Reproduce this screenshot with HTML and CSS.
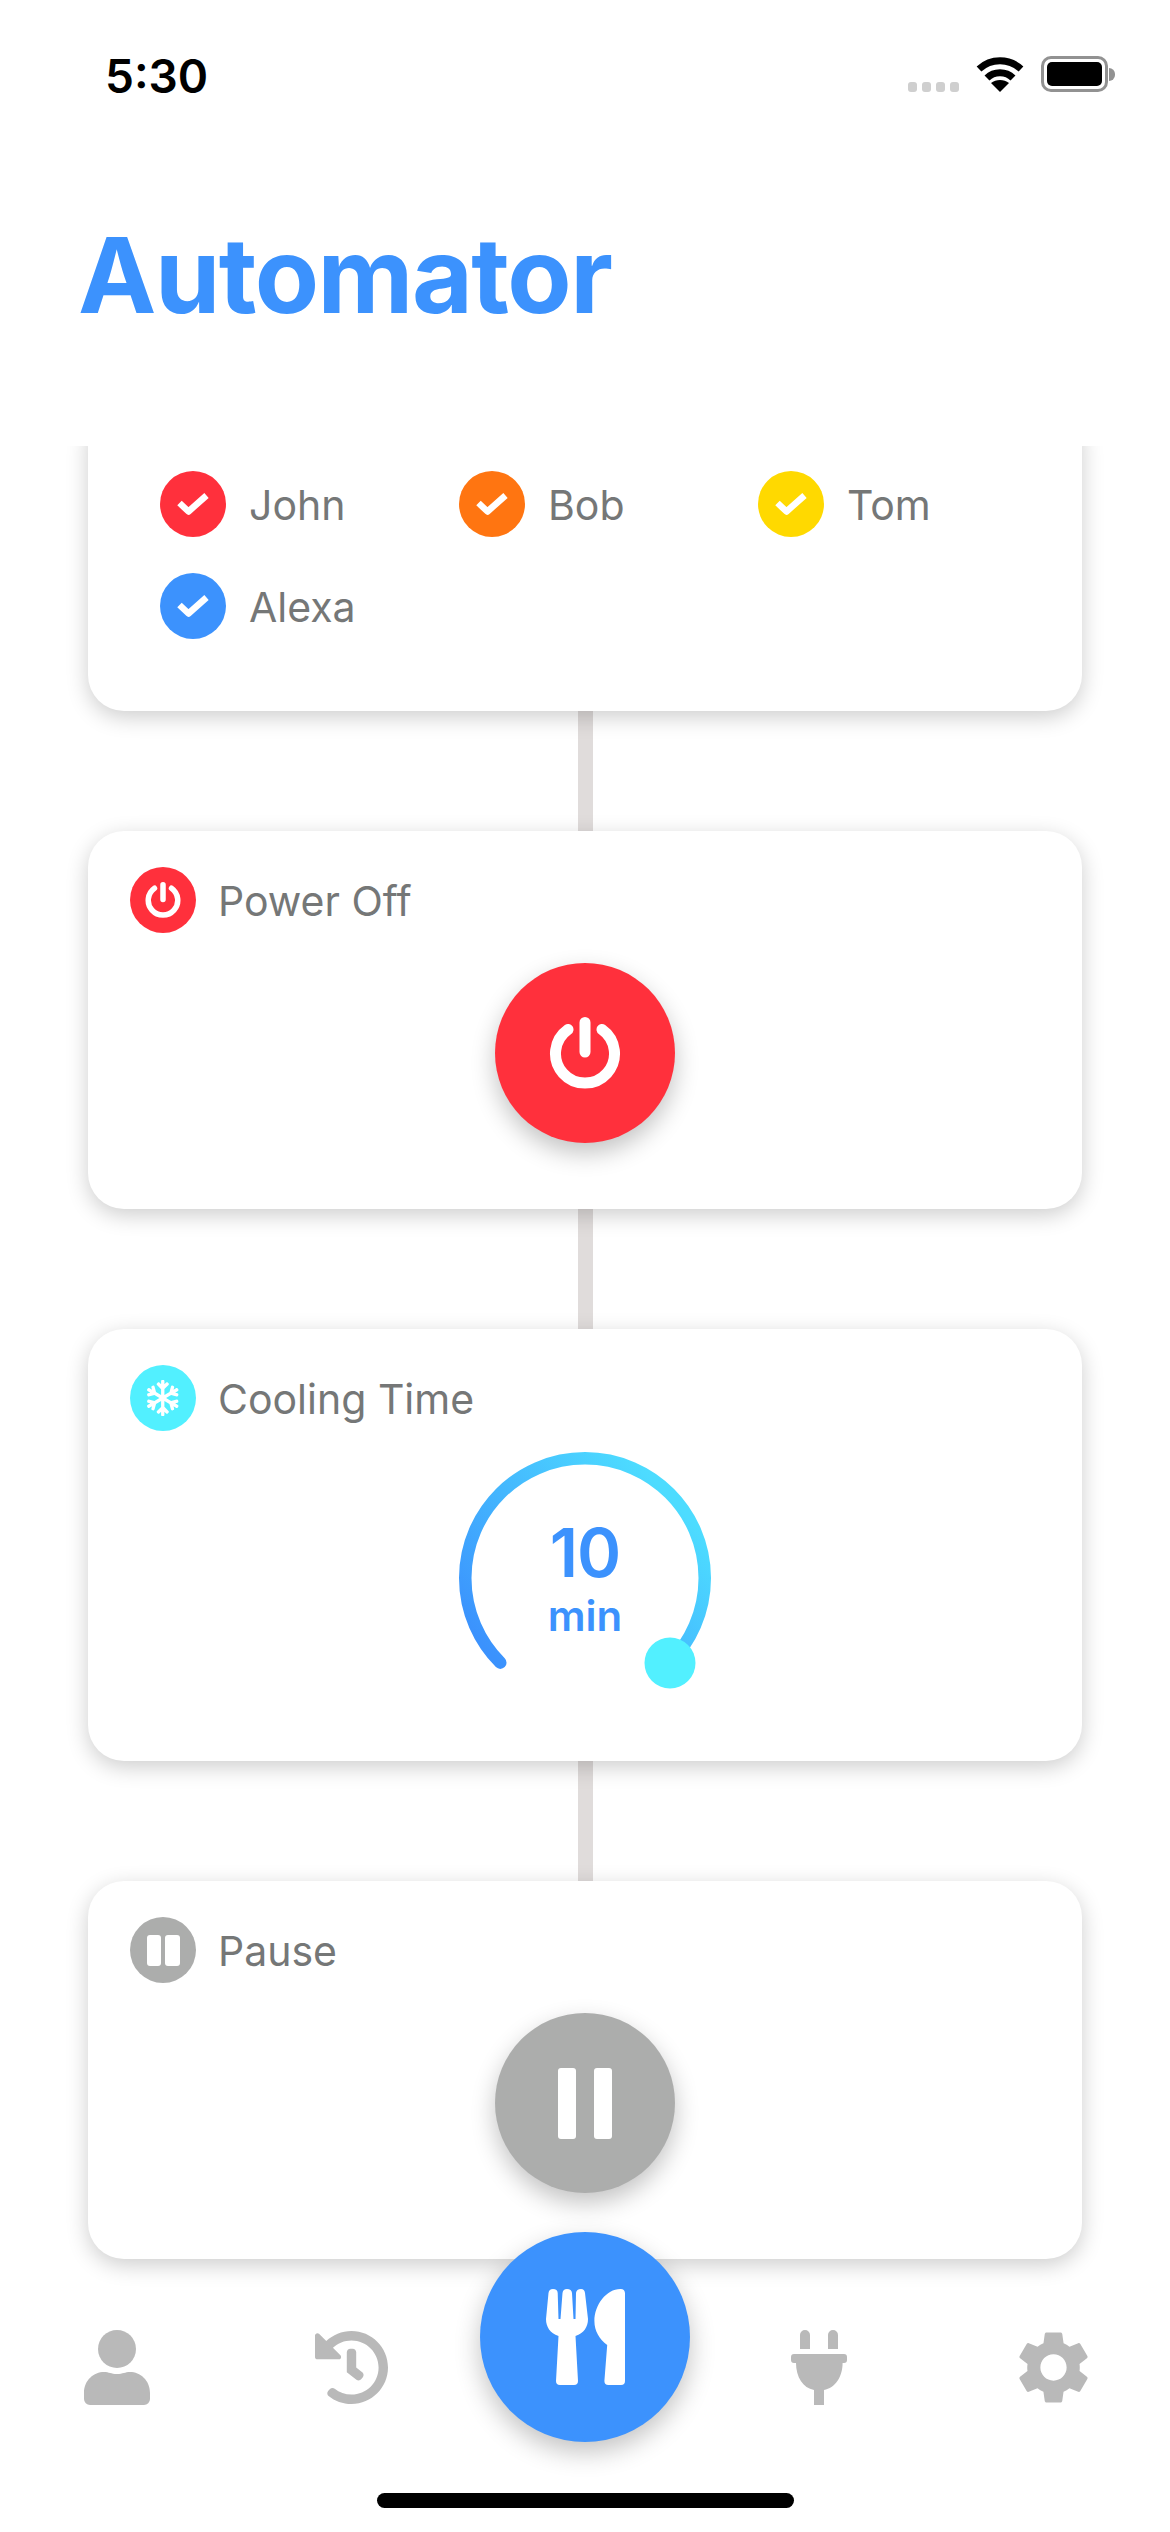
FILE: index.html
```html
<!DOCTYPE html>
<html lang="en">
<head>
<meta charset="utf-8">
<title>Automator</title>
<link rel="stylesheet" href="styles.css">
</head>
<body>
<svg class="defs" width="0" height="0" aria-hidden="true">
  <defs>
    <symbol id="power" viewBox="0 0 72 72">
      <path d="M19 12.5A29.5 29.5 0 1 0 53 12.5M36 5.5V35" fill="none" stroke="#fff" stroke-width="11" stroke-linecap="round"/>
    </symbol>
    <symbol id="check" viewBox="0 0 32 26">
      <path d="M2.500 12 11.500 20.500 29.500 4.500" fill="none" stroke="#fff" stroke-width="6.500" stroke-linejoin="round"/>
    </symbol>
  </defs>
</svg>
<div class="app">
  <div class="status">
    <span class="time">5:30</span>
    <div class="status-right">
      <div class="dots"><i></i><i></i><i></i><i></i></div>
      <svg class="wifi" viewBox="0 0 48 36" width="48" height="36">
        <path d="M3 13C15 2 33 2 45 13M11 22C18 15 30 15 37 22" fill="none" stroke="#000" stroke-width="7"/>
        <path d="M15 27C20 23 28 23 33 27L24 36z" fill="#000"/>
      </svg>
      <div class="battery"><div class="battery-body"><div class="battery-fill"></div></div><div class="battery-cap"></div></div>
    </div>
  </div>
  <header class="header"><h1 class="title">Automator</h1></header>
  <main class="scroll">
    <section class="card card-people">
      <div class="people">
        <div class="person"><span class="dot red"><svg class="check"><use href="#check"/></svg></span><span class="label">John</span></div>
        <div class="person"><span class="dot orange"><svg class="check"><use href="#check"/></svg></span><span class="label">Bob</span></div>
        <div class="person"><span class="dot yellow"><svg class="check"><use href="#check"/></svg></span><span class="label">Tom</span></div>
        <div class="person"><span class="dot blue"><svg class="check"><use href="#check"/></svg></span><span class="label">Alexa</span></div>
      </div>
    </section>
    <div class="link"></div>
    <section class="card">
      <div class="card-head"><span class="dot red"><svg class="small-power"><use href="#power"/></svg></span><span class="label">Power Off</span></div>
      <div class="action"><button class="round red"><svg class="big-power"><use href="#power"/></svg></button></div>
    </section>
    <div class="link"></div>
    <section class="card card-gauge">
      <div class="card-head"><span class="dot cyan">
        <svg class="snow" viewBox="0 0 448 512"><path fill="#fff" d="M440.1 355.2l-39.2-23 34.1-9.3c8.4-2.3 13.4-11.1 11.1-19.6l-4.1-15.5c-2.2-8.5-10.9-13.6-19.3-11.3L343 298.2 271.2 256l71.9-42.2 79.7 21.7c8.4 2.3 17-2.8 19.3-11.3l4.1-15.5c2.2-8.5-2.7-17.3-11.1-19.6l-34.1-9.3 39.2-23c7.5-4.4 10.1-14.2 5.8-21.9l-7.9-13.9c-4.3-7.7-14-10.3-21.5-5.9l-39.2 23 9.1-34.7c2.2-8.5-2.7-17.3-11.1-19.6l-15.2-4.1c-8.4-2.3-17 2.8-19.3 11.3l-21.3 81-71.9 42.2v-84.5L306 70.4c6.1-6.2 6.1-16.4 0-22.6l-11.1-11.3c-6.1-6.2-16.1-6.2-22.2 0l-24.9 25.4V16c0-8.8-7-16-15.7-16h-15.7c-8.7 0-15.7 7.2-15.7 16v46.1l-24.9-25.4c-6.1-6.2-16.1-6.2-22.2 0L142.1 48c-6.1 6.2-6.1 16.4 0 22.6l58.3 59.3v84.5l-71.9-42.2-21.3-81c-2.2-8.5-10.9-13.6-19.3-11.3L72.7 84c-8.4 2.3-13.4 11.1-11.1 19.6l9.1 34.7-39.2-23c-7.5-4.4-17.1-1.8-21.5 5.9l-7.9 13.9c-4.3 7.7-1.8 17.4 5.8 21.9l39.2 23-34.1 9.1c-8.4 2.3-13.4 11.1-11.1 19.6L6 224.2c2.2 8.5 10.9 13.6 19.3 11.3l79.7-21.7 71.9 42.2-71.9 42.2-79.7-21.7c-8.4-2.3-17 2.8-19.3 11.3l-4.1 15.5c-2.2 8.5 2.7 17.3 11.1 19.6l34.1 9.3-39.2 23c-7.5 4.4-10.1 14.2-5.8 21.9L10 391c4.3 7.7 14 10.3 21.5 5.9l39.2-23-9.1 34.7c-2.2 8.5 2.7 17.3 11.1 19.6l15.2 4.1c8.4 2.3 17-2.8 19.3-11.3l21.3-81 71.9-42.2v84.5l-58.3 59.3c-6.1 6.2-6.1 16.4 0 22.6l11.1 11.3c6.1 6.2 16.1 6.2 22.2 0l24.9-25.4V496c0 8.8 7 16 15.7 16h15.7c8.7 0 15.7-7.2 15.7-16v-46.1l24.9 25.4c6.1 6.2 16.1 6.2 22.2 0l11.1-11.3c6.1-6.2 6.1-16.4 0-22.6l-58.3-59.3v-84.5l71.9 42.2 21.3 81c2.2 8.5 10.9 13.6 19.3 11.3L375 428c8.4-2.3 13.4-11.1 11.1-19.6l-9.1-34.7 39.2 23c7.5 4.4 17.1 1.8 21.5-5.9l7.9-13.9c4.6-7.5 2.1-17.3-5.5-21.7z"/></svg>
      </span><span class="label">Cooling Time</span></div>
      <div class="gauge">
        <svg class="gauge-ring" viewBox="0 0 270 270" width="270" height="270">
          <defs><linearGradient id="ring" gradientUnits="userSpaceOnUse" x1="50" y1="220" x2="225" y2="60"><stop offset="0" stop-color="#3b92fd"/><stop offset="1" stop-color="#4ddcff"/></linearGradient></defs>
          <path d="M50.3 219.7A119.75 119.75 0 1 1 219.7 219.7" fill="none" stroke="url(#ring)" stroke-width="12.5" stroke-linecap="round"/>
          <circle cx="220" cy="220" r="25.5" fill="#52f0ff"/>
        </svg>
        <div class="gauge-text"><span class="gauge-value">10</span><span class="gauge-unit">min</span></div>
      </div>
    </section>
    <div class="link"></div>
    <section class="card">
      <div class="card-head"><span class="dot gray"><span class="bars small"><i></i><i></i></span></span><span class="label">Pause</span></div>
      <div class="action"><button class="round gray"><span class="bars big"><i></i><i></i></span></button></div>
    </section>
  </main>
  <nav class="tabbar">
    <div class="tabs">
      <div class="tab">
        <svg viewBox="0 0 66 75" width="66" height="75"><circle cx="33" cy="19" r="19"/><path d="M6 75H60a6 6 0 0 0 6-6V63C66 50 56 42 46 42c-5 0-7 2-13 2s-8-2-13-2C10 42 0 50 0 63v6a6 6 0 0 0 6 6z"/></svg>
      </div>
      <div class="tab">
        <svg viewBox="8 8 496 496" width="73" height="73"><path d="M504 255.531c.253 136.64-111.18 248.372-247.82 248.468-59.015.042-113.223-20.53-155.822-54.911-11.077-8.94-11.905-25.541-1.839-35.607l11.267-11.267c8.609-8.609 22.353-9.551 31.891-1.984C173.062 425.135 212.781 440 256 440c101.705 0 184-82.311 184-184 0-101.705-82.311-184-184-184-48.814 0-93.149 18.969-126.068 49.932l50.754 50.754c10.08 10.08 2.941 27.314-11.313 27.314H24c-8.837 0-16-7.163-16-16V38.627c0-14.254 17.234-21.393 27.314-11.314l49.372 49.372C129.209 34.136 189.552 8 256 8c136.81 0 247.747 110.78 248 247.531zm-180.912 78.784l9.823-12.63c8.138-10.463 6.253-25.542-4.21-33.679L288 256.349V152c0-13.255-10.745-24-24-24h-16c-13.255 0-24 10.745-24 24v135.651l65.409 50.874c10.463 8.137 25.541 6.253 33.679-4.21z"/></svg>
      </div>
      <div class="tab tab-center">
        <button class="fab">
          <svg viewBox="0 0 79 96" width="79" height="96" fill="#fff">
            <path d="M2.500 4Q3 0 7 0q4.500 0 4.700 4L12.500 30h2L16.500 4Q17 0 21 0q4.500 0 5 4l1.500 26h2L30 4q.5-4 5-4q3.500 0 4 4L42 30c0 8-4 14-12.500 17L32 92a4 4 0 0 1-4 4H14a4 4 0 0 1-4-4L12.500 47C4 44 0 38 0 30z"/>
            <path transform="translate(48.400 0)" d="M30.600 4V92a4 4 0 0 1-4 4H14a4 4 0 0 1-4-4L12.800 56C5 50 0 42 0 32 0 16 12 0 26 0a4.500 4.500 0 0 1 4.600 4z"/>
          </svg>
        </button>
      </div>
      <div class="tab">
        <svg viewBox="0 0 56 75" width="56" height="75"><path d="M9 5a5 5 0 0 1 10 0V19H9zM37 5a5 5 0 0 1 10 0V19H37zM3 24H53a3 3 0 0 1 3 3v3a3 3 0 0 1-3 3H51.600C51.600 47 44 58 33 60V75H23V60C12 58 5 47 5 33H3a3 3 0 0 1-3-3V27a3 3 0 0 1 3-3z"/></svg>
      </div>
      <div class="tab">
        <svg viewBox="2.600 2 18.800 20" width="69" height="73"><path fill-rule="evenodd" d="M19.140 12.940c.04-.3.06-.61.06-.94 0-.32-.02-.64-.07-.94l2.030-1.580c.18-.14.23-.41.12-.61l-1.920-3.320c-.12-.22-.37-.29-.59-.22l-2.390.96c-.5-.38-1.030-.7-1.620-.94l-.36-2.540c-.04-.24-.24-.41-.48-.41h-3.840c-.24 0-.43.17-.47.41l-.36 2.540c-.59.24-1.130.57-1.620.94l-2.390-.96c-.22-.08-.47 0-.59.22L2.740 8.870c-.12.21-.08.47.12.61l2.030 1.580c-.05.3-.09.63-.09.94s.02.64.07.94l-2.030 1.580c-.18.14-.23.41-.12.61l1.920 3.320c.12.22.37.29.59.22l2.390-.96c.5.38 1.030.7 1.620.94l.36 2.540c.05.24.24.41.48.41h3.840c.24 0 .44-.17.47-.41l.36-2.540c.59-.24 1.130-.56 1.620-.94l2.390.96c.22.08.47 0 .59-.22l1.920-3.320c.12-.22.07-.47-.12-.61l-2.010-1.580zM12 15.600c-1.980 0-3.600-1.620-3.600-3.600s1.620-3.600 3.600-3.600 3.600 1.620 3.600 3.600-1.620 3.600-3.600 3.600z"/></svg>
      </div>
    </div>
    <div class="home"></div>
  </nav>
</div>
</body>
</html>
```
FILE: styles.css
```css
* { box-sizing: border-box; }
html, body { margin: 0; padding: 0; background: #fff; }
body { font-family: Inter, "Liberation Sans", sans-serif; }
.defs { display: block; height: 0; }
.app { width: 1170px; height: 2532px; display: flex; flex-direction: column; overflow: hidden; background: #fff; }

.status { height: 109px; flex: none; padding: 0 55px 17px 105px; display: flex; justify-content: space-between; align-items: flex-end; }
.time { font-size: 46px; font-weight: 600; line-height: 32px; color: #000; }
.status-right { display: flex; align-items: flex-end; gap: 17px; }
.dots { display: flex; gap: 5px; }
.dots i { display: block; width: 9px; height: 10px; border-radius: 3px; background: #cfcfcf; }
.battery { display: flex; align-items: center; gap: 1px; }
.battery-body { width: 67px; height: 36px; border: 3px solid #929292; border-radius: 10px; padding: 3px; background: #fff; }
.battery-fill { width: 100%; height: 100%; background: #000; border-radius: 5px; }
.battery-cap { width: 6px; height: 13px; background: #929292; border-radius: 0 6px 6px 0; }

.header { height: 337px; flex: none; padding-top: 106px; }
.title { margin: 0 0 0 78px; font-size: 105px; line-height: 120px; font-weight: 700; letter-spacing: -1.5px; color: #3c92fd; }

.scroll { flex: 1; min-height: 0; overflow: hidden; display: flex; flex-direction: column; align-items: center; }
.card { position: relative; flex: none; width: 994px; background: #fff; border-radius: 36px; padding: 36px 42px 66px; box-shadow: 0 6px 22px rgba(0, 0, 0, .2); }
.card-people { margin-top: -40px; padding: 65px 72px 72px; }
.card-gauge { padding-bottom: 48px; }
.link { flex: none; width: 15px; height: 120px; background: #e0dcdb; }

.people { display: grid; grid-template-columns: repeat(3, 299px); row-gap: 36px; }
.person { display: flex; align-items: center; gap: 23px; }
.card-head { display: flex; align-items: center; gap: 22px; }
.dot { flex: none; width: 66px; height: 66px; border-radius: 50%; display: flex; align-items: center; justify-content: center; }
.label { font-size: 41px; font-weight: 400; color: #757777; line-height: 50px; padding-top: 2px; }
.red { background: #ff303c; }
.orange { background: #ff7511; }
.yellow { background: #ffd900; }
.blue { background: #3c92fd; }
.cyan { background: #52f0ff; }
.gray { background: #acadac; }
.check { width: 32px; height: 26px; }
.small-power { width: 36px; height: 36px; }
.snow { width: 31.5px; height: 36px; }

.action { display: flex; justify-content: center; padding-top: 30px; }
.round { width: 180px; height: 180px; border: 0; padding: 0; border-radius: 50%; display: flex; align-items: center; justify-content: center; box-shadow: 0 10px 24px rgba(0, 0, 0, .24); }
.big-power { width: 72px; height: 72px; }
.bars { display: flex; }
.bars i { display: block; background: #fff; }
.bars.big { gap: 18px; }
.bars.big i { width: 18px; height: 71px; border-radius: 3px; }
.bars.small { gap: 4px; }
.bars.small i { width: 14.5px; height: 31px; border-radius: 3px; }

.gauge { position: relative; width: 270px; height: 270px; margin: 12px auto 0; }
.gauge-ring { display: block; }
.gauge-text { position: absolute; inset: 0; display: flex; flex-direction: column; align-items: center; padding-top: 75px; color: #3c92fd; }
.gauge-value { font-size: 67px; font-weight: 600; line-height: 70px; letter-spacing: -1px; }
.gauge-unit { font-size: 42px; font-weight: 600; line-height: 50px; padding-top: 3px; }

.tabbar { flex: none; height: 222px; position: relative; padding-top: 20px; }
.tabs { display: grid; grid-template-columns: repeat(5, 234px); height: 75px; }
.tab { display: flex; align-items: center; justify-content: center; fill: #b9b9b9; }
.tab-center { position: relative; }
.fab { position: absolute; left: 50%; top: -98px; margin-left: -105px; width: 210px; height: 210px; padding: 0; border: 0; border-radius: 50%; background: #3c92fd; display: flex; align-items: center; justify-content: center; box-shadow: 0 10px 26px rgba(0, 0, 0, .24); }
.home { width: 417px; height: 15px; margin: 88px auto 0; background: #000; border-radius: 8px; }
```
